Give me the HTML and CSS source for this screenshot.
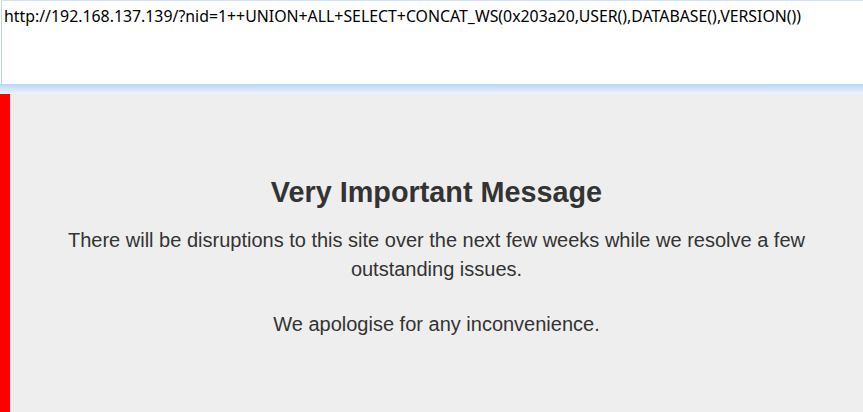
FILE: index.html
```html
<!DOCTYPE html>
<html lang="en">
<head>
    <meta charset="UTF-8">
    <title>Very Important Message</title>
    <link rel="stylesheet" href="styles.css">
</head>
<body>
    <div class="url-box">
        <div class="url-text">http://192.168.137.139/?nid=1++UNION+ALL+SELECT+CONCAT_WS(0x203a20,USER(),DATABASE(),VERSION())</div>
    </div>

    <div class="page">
        <div class="side-bar"></div>
        <div class="notice">
            <h1 class="notice-title">Very Important Message</h1>
            <p class="notice-text">There will be disruptions to this site over the next few weeks while we resolve a few outstanding issues.</p>
            <p class="notice-text">We apologise for any inconvenience.</p>
        </div>
    </div>
</body>
</html>
```

FILE: styles.css
```css
* {
    margin: 0;
    padding: 0;
    box-sizing: border-box;
}

html, body {
    height: 100%;
}

body {
    background: #eeeeee;
    display: flex;
    flex-direction: column;
    overflow: hidden;
}

.url-box {
    height: 94px;
    padding: 0 0 10px 1px;
    background: linear-gradient(to bottom, #ffffff 0, #ffffff 84px, #b9d6f7 84px, #eef4fc 94px);
}

.url-box .url-text {
    height: 84px;
    background: #ffffff;
    border-top: 1px solid #cfe2f8;
    border-left: 1px solid #b9d6f7;
    padding: 4px 0 0 2px;
    font-family: "Noto Sans", "Liberation Sans", sans-serif;
    font-size: 15.85px;
    line-height: 22px;
    color: #000000;
    white-space: nowrap;
}

.page {
    flex: 1;
    display: flex;
}

.side-bar {
    width: 10px;
    background: #ff0000;
}

.notice {
    flex: 1;
    text-align: center;
    padding: 82px 40px 0;
    font-family: "Liberation Sans", Arial, sans-serif;
    color: #333333;
}

.notice-title {
    font-size: 28.8px;
    font-weight: bold;
    line-height: 32px;
    margin-bottom: 18px;
}

.notice-text {
    font-size: 20px;
    line-height: 29px;
    margin-bottom: 26px;
}
```
